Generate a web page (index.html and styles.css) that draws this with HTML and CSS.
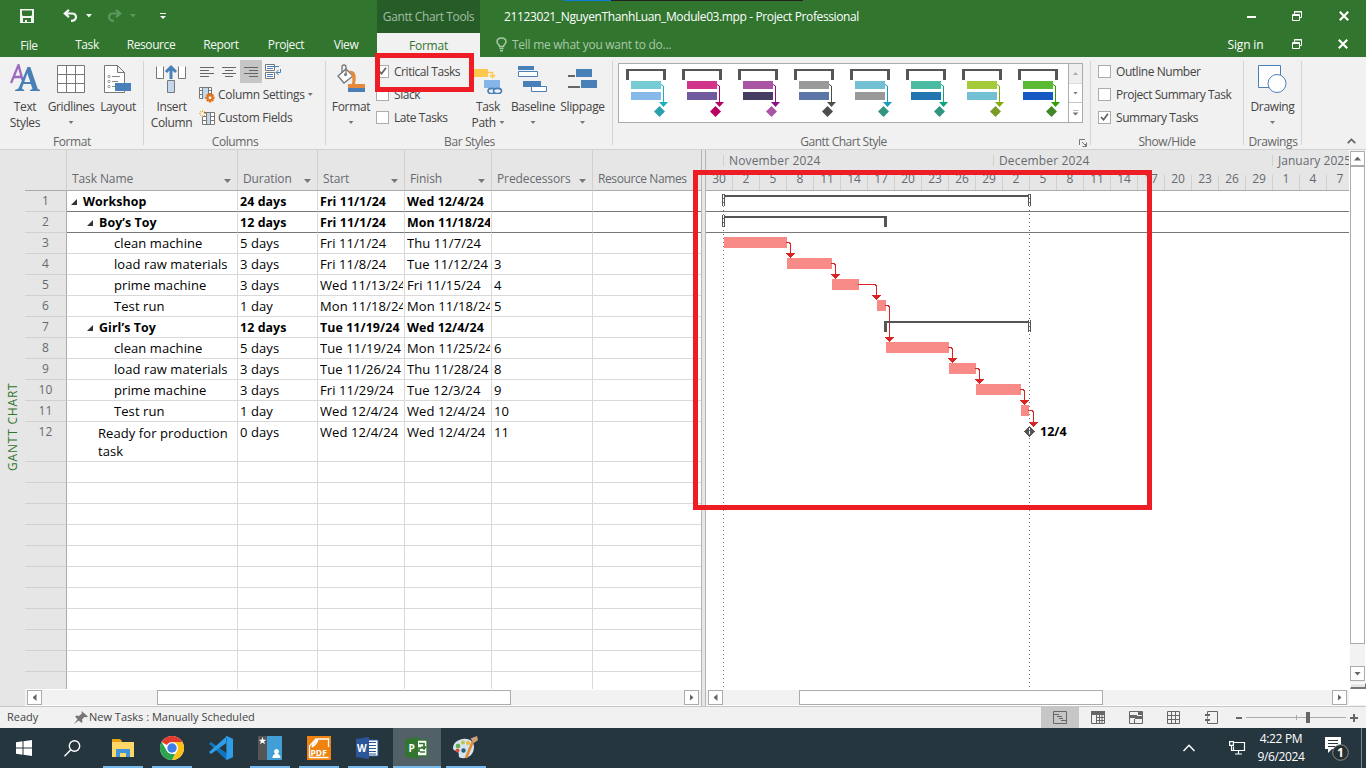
FILE: index.html
```html
<!DOCTYPE html>
<html lang="en">
<head>
<meta charset="utf-8">
<title>21123021_NguyenThanhLuan_Module03.mpp - Project Professional</title>
<link rel="stylesheet" href="styles.css">
</head>
<body>
<div class="app">
  <header class="top">
    <div class="top-left">
      <div class="quick">
        <svg class="q-save" width="14" height="14" viewBox="0 0 14 14"><path fill="#f4f4f4" fill-rule="evenodd" d="M0 0h14v14H0zM2 1.500v4.500l1 1h8l1-1V1.500zM3 9v4h2v-2h2v2h4V9z"/></svg>
        <svg class="q-undo" width="15" height="13" viewBox="0 0 15 13"><path fill="none" stroke="#f4f4f4" stroke-width="2.200" d="M6 .8 1.800 4.500 6 8.200M2 4.500h7c5.500 0 5.500 7.300-1 7.300"/></svg>
        <svg class="q-caret" width="6" height="4" viewBox="0 0 6 4"><path fill="#f4f4f4" d="M0 0h6L3 3.500z"/></svg>
        <svg class="q-redo" width="15" height="13" viewBox="0 0 15 13"><path fill="none" stroke="#5f9660" stroke-width="2.200" d="M9 .8l4.200 3.700L9 8.200M13 4.500H6c-5.500 0-5.500 7.300 1 7.300"/></svg>
        <svg class="q-caret" width="6" height="4" viewBox="0 0 6 4"><path fill="#5f9660" d="M0 0h6L3 3.500z"/></svg>
        <svg class="q-more" width="6" height="6" viewBox="0 0 6 6"><path fill="#f4f4f4" d="M0 0h6v1H0zM0 3h6L3 6z"/></svg>
      </div>
      <nav class="tabs">
        <span class="w58">File</span><span class="w58">Task</span><span class="w70">Resource</span><span class="w70">Report</span><span class="w60">Project</span><span class="w60">View</span>
      </nav>
    </div>
    <div class="context">
      <div class="context-name">Gantt Chart Tools</div>
      <div class="context-tab">Format</div>
    </div>
    <div class="top-mid">
      <div class="title">21123021_NguyenThanhLuan_Module03.mpp - Project Professional</div>
      <div class="tell">
        <svg width="11" height="15" viewBox="0 0 11 15"><path fill="none" stroke="#a9c9a9" stroke-width="1.500" d="M3.500 9.500C3.500 8 1 7 1 4.800 1 2.500 3 1 5.500 1S10 2.500 10 4.800C10 7 7.500 8 7.500 9.500zM3.500 11.500h4M4 13.700h3"/></svg>
        <span>Tell me what you want to do...</span>
      </div>
    </div>
    <div class="window">
      <div class="win-row">
        <span></span>
        <svg width="9" height="11" viewBox="0 0 9 11"><path fill="#fff" d="M0 6h9v2H0z"/></svg>
        <svg width="10" height="10" viewBox="0 0 10 10"><path fill="none" stroke="#fff" d="M2.500 3V.5h7v6H8M.5 3.500h7v6h-7zM2 1h8M0 4.500h8"/></svg>
        <svg width="10" height="10" viewBox="0 0 10 10"><path stroke="#fff" stroke-width="2.200" d="M.8.8l8.400 8.400M9.200.8.8 9.200"/></svg>
      </div>
      <div class="win-row second">
        <span class="signin">Sign in</span>
        <svg width="10" height="10" viewBox="0 0 10 10"><path fill="none" stroke="#fff" d="M2.500 3V.5h7v6H8M.5 3.500h7v6h-7zM2 1h8M0 4.500h8"/></svg>
        <svg width="10" height="10" viewBox="0 0 10 10"><path stroke="#fff" stroke-width="2.200" d="M.8.8l8.400 8.400M9.200.8.8 9.200"/></svg>
      </div>
    </div>
    <div class="share-strip"></div>
  </header>

  <section class="ribbon">
    <div class="group g-format">
      <div class="controls">
        <div class="big w50"><svg width="31" height="30" viewBox="0 0 31 30"><path fill="none" stroke="#9d6abf" stroke-width="2.300" d="M1 19 8.500 1l4 15M4 13h8"/><path fill="#4a80b8" fill-rule="evenodd" d="M17.500 3h2.800l7.500 22 2.200 1v1H20v-1l2.500-1-1.700-5h-7.300l-1.600 4.600 2.300 1.400v1H5v-1l3.500-1.500zM14.300 18h6l-3-8.800z"/></svg><span>Text</span><span>Styles</span></div>
        <div class="big w42"><svg width="28" height="30" viewBox="0 0 28 30"><path fill="#fff" stroke="#777" d="M.5 1.500h27v27H.5z"/><path fill="none" stroke="#777" d="M9.500 1v27M18.500 1v27M0 10.500h28M0 19.500h28"/></svg><span>Gridlines</span><i class="caret"></i></div>
        <div class="big w52"><svg width="28" height="30" viewBox="0 0 28 30"><path fill="#fff" stroke="#777" d="M.5 1.500h13l7 7v20H.5zM13.500 1.500v7h7"/><path stroke="#888" d="M8 12.500h8M8 17.500h6M8 22.500h3"/><g fill="#fff" stroke="#999"><circle cx="5" cy="12.500" r="1.200"/><circle cx="5" cy="17.500" r="1.200"/><circle cx="5" cy="22.500" r="1.200"/></g><path fill="#4a80b8" d="M11 19h16v8H11z"/></svg><span>Layout</span></div>
      </div>
      <div class="caption">Format</div>
    </div>
    <div class="group g-columns">
      <div class="controls">
        <div class="big w55"><svg width="31" height="30" viewBox="0 0 31 30"><path fill="#fff" stroke="#777" d="M.5 2.500v12h7v-12M22.500 2.500v12h7v-12"/><path fill="#c3d7ee" stroke="#777" d="M11.500 16.500h7v12h-7z"/><path fill="none" stroke="#4a80b8" stroke-width="3" d="M15 15V3M10 8l5-5 5 5"/></svg><span>Insert</span><span>Column</span></div>
        <div class="stack">
          <div class="aligns">
            <b><svg width="14" height="12" viewBox="0 0 14 12"><path stroke="#666" d="M0 1.500h14M0 4.500h9M0 7.500h14M0 10.500h9"/></svg></b>
            <b><svg width="14" height="12" viewBox="0 0 14 12"><path stroke="#666" d="M0 1.500h14M3 4.500h8M0 7.500h14M3 10.500h8"/></svg></b>
            <b class="on"><svg width="14" height="12" viewBox="0 0 14 12"><path stroke="#666" d="M0 1.500h14M5 4.500h9M0 7.500h14M5 10.500h9"/></svg></b>
            <b><svg width="16" height="16" viewBox="0 0 16 16"><path fill="#fff" stroke="#777" d="M.5.500h9v6h-9zM.5 8.500h9v6h-9z"/><path fill="none" stroke="#4a80b8" d="M2 2.500h12M2 4.500h6M2 10.500h6M2 12.500h6M15.500 5v3.500H11M13.500 6l-2.500 2.500 2.500 2.500"/></svg></b>
          </div>
          <div class="small"><svg width="16" height="16" viewBox="0 0 16 16"><path fill="#fff" stroke="#777" d="M.5.500h12v11H.5zM3.500.500v11M9.500.500v11M.5 3.500h12M.5 7.500h12"/><path fill="#c3d7ee" d="M4 1h5v11H4z"/><path stroke="#e2731d" stroke-width="2.400" d="M11 6v9.500M6.500 10.800h9M7.800 7.500l6.500 6.500M14.300 7.500 7.800 14"/><circle cx="11" cy="10.800" r="1.400" fill="#fff"/></svg><span>Column Settings</span><i class="caret"></i></div>
          <div class="small"><svg width="16" height="16" viewBox="0 0 16 16"><path fill="#fff" stroke="#777" d="M3.500 2.500h12v12h-12zM7.500 2v12M11.500 2v12M3 6.500h12M3 10.500h12"/><path fill="#c3d7ee" d="M8 3h3v11H8z"/><path stroke="#e8b04a" d="M3.500 0v7M0 3.500h7M1 1l5 5M6 1 1 6"/><circle cx="3.500" cy="3.500" r="1.500" fill="#fff"/></svg><span>Custom Fields</span></div>
        </div>
      </div>
      <div class="caption">Columns</div>
    </div>
    <div class="group g-bars">
      <div class="controls">
        <div class="big w50"><svg width="30" height="30" viewBox="0 0 30 30"><path fill="#fff" stroke="#777" stroke-width="1.300" d="M2 12 10 5l7 7-9 7z"/><path fill="none" stroke="#777" stroke-width="1.300" d="M6 9V3q0-2 2-2t2 2v7"/><circle cx="9.500" cy="10.500" r="1.500" fill="#777"/><path fill="#e58a3c" d="M13 7c6-1 8 4 6 13h-3c1-6 0-10-3-13zM12 20h17v4H12z"/><path fill="#4a80b8" d="M12 24h17v4H12z"/></svg><span>Format</span><i class="caret"></i></div>
        <div class="checks bar-checks">
          <label><i class="box"><svg width="9" height="8" viewBox="0 0 9 8"><path fill="none" stroke="#666" stroke-width="1.800" d="M1 4l2.500 2.700L8 .7"/></svg></i>Critical Tasks</label>
          <label><i class="box"></i>Slack</label>
          <label><i class="box"></i>Late Tasks</label>
        </div>
        <div class="big w40"><svg width="32" height="30" viewBox="0 0 32 30"><path fill="#fdc84b" d="M0 5h16v8H0z"/><path fill="none" stroke="#fdc84b" stroke-width="1.500" d="M16 8.500h4.500V13M18 11l2.500 2.500L23 11"/><path fill="#84b5e8" d="M12 16h16v8H12z"/><g fill="#f1f1f1" stroke="#4a80b8" stroke-width="1.700"><ellipse cx="20" cy="27" rx="4" ry="2.600"/><ellipse cx="25.500" cy="27" rx="4" ry="2.600"/></g></svg><span>Task</span><span>Path <i class="caret inline"></i></span></div>
        <div class="big w50"><svg width="30" height="30" viewBox="0 0 30 30"><path fill="#4a80b8" d="M0 2h16v4H0zM5 17h18v6H5z"/><path fill="#fff" stroke="#4a80b8" d="M.5 7.500h19v5H.5zM13.500 22.500h15v5h-15z"/></svg><span>Baseline</span><i class="caret"></i></div>
        <div class="big w49"><svg width="29" height="30" viewBox="0 0 29 30"><path fill="#4a80b8" d="M8 5h16v8H8zM13 16h16v8H13z"/><path fill="#666" d="M0 11h7v2H0zM0 22h12v2H0z"/></svg><span>Slippage</span><i class="caret"></i></div>
      </div>
      <div class="caption">Bar Styles</div>
    </div>
    <div class="group g-style">
      <div class="controls">
        <div class="gallery">
          <div class="styles" id="styles"></div>
          <div class="spin"><b class="dim"><i class="up"></i></b><b><i class="caret"></i></b><b><i class="caret topped"></i></b></div>
        </div>
      </div>
      <div class="caption">Gantt Chart Style</div>
      <svg class="launcher" width="8" height="8" viewBox="0 0 8 8"><path fill="none" stroke="#777" d="M.5 6V.5H6M3 3l4 4M7.500 3.500v4h-4M5 5.500h2"/></svg>
    </div>
    <div class="group g-show">
      <div class="controls">
        <div class="checks">
          <label><i class="box"></i>Outline Number</label>
          <label><i class="box"></i>Project Summary Task</label>
          <label><i class="box"><svg width="9" height="8" viewBox="0 0 9 8"><path fill="none" stroke="#666" stroke-width="1.800" d="M1 4l2.500 2.700L8 .7"/></svg></i>Summary Tasks</label>
        </div>
      </div>
      <div class="caption">Show/Hide</div>
    </div>
    <div class="group g-draw">
      <div class="controls">
        <div class="big w57"><svg width="29" height="30" viewBox="0 0 29 30"><path fill="#fff" stroke="#4a80b8" d="M.5 1.500h22v22H.5z"/><circle cx="19" cy="19.500" r="9" fill="#fff" stroke="#4a80b8"/></svg><span>Drawing</span><i class="caret"></i></div>
      </div>
      <div class="caption">Drawings</div>
    </div>
    <div class="collapse"><svg width="9" height="6" viewBox="0 0 9 6"><path fill="none" stroke="#666" stroke-width="1.800" d="M.7 5.200 4.500 1.400l3.800 3.800"/></svg></div>
  </section>

  <main class="work">
    <div class="view-name"><span>GANTT CHART</span></div>
    <div class="table-pane">
      <div class="grid" id="grid">
        <div class="row head"><div class="num"></div><div>Task Name<i class="caret"></i></div><div>Duration<i class="caret"></i></div><div>Start<i class="caret"></i></div><div>Finish<i class="caret"></i></div><div>Predecessors<i class="caret"></i></div><div class="tight">Resource Names</div></div>
      </div>
      <div class="hscroll"><b><i class="left"></i></b><div class="thumb t1"></div><b><i class="right"></i></b></div>
    </div>
    <div class="splitter"></div>
    <div class="chart-pane">
      <div class="months"><span class="m0"></span><span class="m1">November 2024</span><span class="m2">December 2024</span><span class="m3">January 2025</span></div>
      <div class="days" id="days"></div>
      <svg class="chart" width="643" height="498" viewBox="706 191 643 498" id="chart" shape-rendering="crispEdges"></svg>
      <div class="hscroll"><b><i class="left"></i></b><div class="thumb t2"></div><b><i class="right"></i></b></div>
    </div>
    <div class="vscroll"><b><i class="up"></i></b><div class="vthumb"></div><b><i class="caret"></i></b><div class="vsplit"></div></div>
    <div class="mark mark-chart"></div>
  </main>

  <div class="status">
    <span class="ready">Ready</span>
    <svg class="pin" width="14" height="13" viewBox="0 0 14 13"><path fill="#777" d="M7.500 0 14 5.500l-1.500.8-2-.3L8 8.500l.5 2L7.500 12 4.800 9.500 0 13l3.500-4.800L1 5.500 2.500 4.500l2.500.5L7.800 2.500z"/></svg>
    <span class="mode">New Tasks : Manually Scheduled</span>
    <div class="views">
      <b class="on"><svg width="14" height="13" viewBox="0 0 14 13"><path fill="none" stroke="#666" d="M.5.500h13v12H.5zM1 3.500h5M4 5.500h5M6 7.500h4M8 9.500h5"/></svg></b>
      <b><svg width="14" height="13" viewBox="0 0 14 13"><path fill="none" stroke="#666" d="M.5.500h13v12H.5zM5.500 3v9M8.500 3v9M11 3v9M5 6.500h9M5 9.500h9"/><path fill="#666" d="M0 0h14v4H0z"/></svg></b>
      <b><svg width="14" height="13" viewBox="0 0 14 13"><path fill="none" stroke="#666" d="M.5.500h13v12H.5zM5.500 8v4"/><path fill="#666" d="M9 1h4v3H9zM1 4h7v3H1zM6 5h8v3H6z"/></svg></b>
      <b><svg width="13" height="13" viewBox="0 0 13 13"><path fill="none" stroke="#666" d="M.5.500h12v12H.5zM4.500 0v13M8.500 0v13M0 4.500h13M0 8.500h13"/></svg></b>
      <b><svg width="13" height="13" viewBox="0 0 13 13"><path fill="none" stroke="#666" d="M2.500 3V.5h10v12h-10V10M2.500 5.500v2"/><path fill="#666" d="M0 3h5v2H0zM0 8h5v2H0z"/></svg></b>
    </div>
    <svg class="zoom" width="124" height="14" viewBox="0 0 124 14"><path fill="#666" d="M0 6h6v2H0zM114 6h8v2h-8zM117 3h2v8h-2zM70 1h4v11h-4z"/><path stroke="#aaa" d="M10 6.500h60M74 6.500h36M60.500 4v5"/></svg>
  </div>

  <footer class="taskbar">
    <b class="s48"><svg width="16" height="16" viewBox="0 0 16 16"><path fill="#fff" d="M0 2.200 6.500 1.300V7.500H0zM7.500 1.200 16 0v7.500H7.500zM0 8.500h6.500v6.200L0 13.800zM7.500 8.500H16V16l-8.500-1.200z"/></svg></b>
    <b class="s50"><svg width="17" height="17" viewBox="0 0 17 17"><circle cx="10.500" cy="6" r="5.200" fill="none" stroke="#fff" stroke-width="1.400"/><path stroke="#fff" stroke-width="1.400" d="M6.800 9.800.5 16.200"/></svg></b>
    <b class="run"><svg width="22" height="18" viewBox="0 0 22 18"><path fill="#e8a214" d="M0 0h8l2 2-1 2H0z"/><path fill="#ffd767" d="M0 3h22v15H0z"/><path fill="#3f94dc" d="M4 18v-8h14v8h-4v-4H8v4z"/></svg></b>
    <b class="run"><svg width="24" height="24" viewBox="0 0 24 24"><circle cx="12" cy="12" r="12" fill="#fff"/><path fill="#e33b2e" d="M12 12 1.600 6A12 12 0 0 1 22.400 6z"/><path fill="#fbc116" d="M12 6h10.400A12 12 0 0 1 12 24l5-9z"/><path fill="#2da44e" d="M1.600 6 7 15l5 3 3 0-3 6A12 12 0 0 1 1.600 6z"/><circle cx="12" cy="12" r="6" fill="#fff"/><circle cx="12" cy="12" r="4.700" fill="#3f7de8"/></svg></b>
    <b><svg width="24" height="24" viewBox="0 0 24 24"><path fill="#1176bf" d="M17.500 0 24 3v18l-6.500 3L2 9.500 0 8l2-2 16 11.500z"/><path fill="#2d9de8" d="M17.500 0 24 3v18l-6.500 3zM0 16l2 2L18 6.500V0z"/></svg></b>
    <b class="run"><svg width="24" height="24" viewBox="0 0 24 24"><path fill="#555" d="M0 0h9v24H0z"/><path fill="#419fd6" d="M9 0h15v24H9z"/><path fill="#fff" d="M4.500 1 5.500 3.700h2.900L6.100 5.400 7 8.200 4.500 6.500 2 8.200l.9-2.800L.6 3.700h2.900zM18.500 13a2.500 2.500 0 0 1 1.500 4.500c0 1 2.500 1 2.500 4.500h-8c0-3.500 2.500-3.500 2.500-4.500a2.500 2.500 0 0 1 1.500-4.500z"/></svg></b>
    <b class="run"><svg width="24" height="24" viewBox="0 0 24 24"><path fill="#f08310" d="M0 0h24v24H0z"/><path fill="none" stroke="#fff" stroke-width="1.300" d="M2.500 21.500V10L9 3h12.500v8M2.500 21.500h19M5 11c1-5 5-6 6-8-1 5-3 6-6 8"/><text x="3.500" y="20" class="pdf">PDF</text></svg></b>
    <b class="run"><svg width="24" height="22" viewBox="0 0 24 22"><path fill="#fff" stroke="#2b579a" d="M12 3h10v16H12z"/><path stroke="#2b579a" stroke-width="1.200" d="M13 5.500h7M13 8.500h7M13 11.500h7M13 14.500h7M13 17h7"/><path fill="#2b579a" d="M0 2 13 0v22L0 20z"/><text x="1" y="15" class="letter">W</text></svg></b>
    <b class="active"><svg width="24" height="22" viewBox="0 0 24 22"><path fill="#fff" stroke="#31752f" stroke-width="1.300" d="M12 3h10v16H12z"/><path fill="none" stroke="#31752f" stroke-width="1.700" d="M14 6.500h5v5M14 15v-4h3M16.500 9.500l2.500 2.500 2-2.500M15 15h5"/><path fill="#31752f" d="M0 2 13 0v22L0 20z"/><text x="3.500" y="15" class="letter">P</text></svg></b>
    <b class="run"><svg width="25" height="24" viewBox="0 0 25 24"><path fill="#d5e3ef" d="M10 3c7-1 11 3 11 8 0 7-5 12-13 11-4-1-1-4-3-6s-5-1-5-4c0-5 5-8.500 10-9z"/><circle cx="10" cy="6.500" r="2" fill="#b9c948"/><circle cx="5" cy="10" r="2.300" fill="#5fae47"/><circle cx="4.500" cy="14.500" r="2" fill="#e04c3c"/><circle cx="15" cy="7" r="2" fill="#e9b735"/><circle cx="10.500" cy="14.500" r="2.200" fill="#25607f"/><path stroke="#e18a35" stroke-width="2.600" d="M13 22 20 5"/><path fill="#cfa177" d="M17.500 2.500 24 0l1 4-4 3z"/></svg></b>
    <div class="tray">
      <svg class="up-arrow" width="12" height="8" viewBox="0 0 12 8"><path fill="none" stroke="#fff" stroke-width="1.400" d="M.5 7 6 1.200 11.500 7"/></svg>
      <svg class="net" width="17" height="14" viewBox="0 0 17 14"><path fill="none" stroke="#fff" stroke-width="1.200" d="M5 1.500h10.500v8H4.500v-4M6 13h7M9.500 10v3M.6.600h3.800v3.800H.6zM2.500 4.500v5h2"/></svg>
      <div class="clock"><span>4:22 PM</span><span>9/6/2024</span></div>
      <svg class="notes" width="26" height="26" viewBox="0 0 26 26"><path fill="#fff" d="M1 2h16v12H8l-4 4v-4H1z"/><path stroke="#26373f" stroke-width="1.200" d="M4 5.500h10M4 8.500h10M4 11.500h7"/><circle cx="16.500" cy="17.500" r="7.800" fill="#26302f" stroke="#8c8c8c"/><text x="13" y="22" class="badge">1</text></svg>
      <i class="peek"></i>
    </div>
  </footer>
  <div class="mark mark-check"></div>
</div>
<script src="script.js"></script>
</body>
</html>
```
FILE: styles.css
```css
* { box-sizing: border-box; }
body { margin: 0; font: 12px/16px "Open Sans", "Noto Sans", sans-serif; color: #444; overflow: hidden; }
b { font-weight: normal; }
svg { display: block; flex: none; }
.app { position: relative; width: 1366px; height: 768px; display: flex; flex-direction: column; background: #fff; white-space: nowrap; }

.top { position: relative; display: flex; height: 57px; background: #31752f; color: #fff; flex: none; }
.top-left { width: 377px; }
.quick { display: flex; align-items: center; height: 31px; padding-left: 20px; }
.q-undo { margin-left: 29px; }
.q-caret { margin-left: 8px; }
.q-redo { margin-left: 15px; }
.q-more { margin-left: 24px; }
.tabs { display: flex; height: 26px; line-height: 28px; color: #f3f8f3; letter-spacing: -.4px; }
.tabs span { text-align: center; }
.tabs span:first-child { padding-top: 1px; }
.w58 { width: 58px; } .w70 { width: 70px; } .w60 { width: 60px; }
.context { width: 103px; text-align: center; letter-spacing: -.4px; }
.context-name { height: 33px; line-height: 34px; background: #265c28; color: #a4bea5; }
.context-tab { height: 24px; line-height: 25px; background: #f1f1f1; color: #31752f; letter-spacing: -.2px; }
.top-mid { flex: 1; }
.title { padding-left: 24px; height: 31px; line-height: 34px; letter-spacing: -.38px; }
.tell { display: flex; align-items: center; height: 26px; padding-left: 16px; gap: 5px; color: #a9c9a9; letter-spacing: -.27px; }
.tell span { padding-top: 2px; }
.window { width: 150px; }
.win-row { display: grid; grid-template-columns: 24px 22px 70px 24px; align-items: center; justify-items: center; height: 31px; }
.win-row.second { grid-template-columns: 59px 43px 48px; height: 26px; }
.win-row.second svg { margin-left: 1px; }
.signin { padding-top: 2px; letter-spacing: -.15px; }
.share-strip { position: absolute; left: 563px; top: 0; width: 240px; height: 1px; background: linear-gradient(90deg, #0f7bd8 48px, #202020 48px); }

.ribbon { display: flex; height: 93px; background: #f1f1f1; border-bottom: 1px solid #d2d2d2; flex: none; letter-spacing: -.3px; }
.group { position: relative; height: 92px; }
.group::after { content: ""; position: absolute; right: 0; top: 4px; width: 1px; height: 84px; background: #d4d4d4; }
.controls { display: flex; height: 75px; }
.caption { height: 17px; line-height: 19px; text-align: center; color: #666; letter-spacing: -.4px; }
.g-format { width: 144px; } .g-columns { width: 182px; } .g-bars { width: 287px; }
.g-style { width: 478px; } .g-show { width: 153px; } .g-draw { width: 58px; }
.g-style .caption { padding-right: 17px; letter-spacing: -.5px; }
.g-show .caption { padding-right: 1px; }
.big { display: flex; flex-direction: column; align-items: center; padding-top: 7px; letter-spacing: -.35px; }
.big > svg { margin-bottom: 5px; }
.big > .caret { margin-top: 6px; }
.w50 { width: 50px; } .w42 { width: 42px; } .w52 { width: 52px; } .w55 { width: 55px; }
.w40 { width: 40px; } .w49 { width: 49px; } .w57 { width: 57px; }
.caret, .up { display: inline-block; width: 5px; height: 3px; background: #777; clip-path: polygon(0 0, 100% 0, 50% 100%); flex: none; }
.caret.inline { vertical-align: 3px; margin-left: 1px; }
.up { clip-path: polygon(50% 0, 100% 100%, 0 100%); }
.stack { padding-top: 3px; }
.aligns { display: flex; height: 23px; margin-left: -3px; }
.aligns b { width: 22px; height: 23px; display: flex; align-items: center; justify-content: center; }
.aligns .on { background: #c6c6c6; }
.small { display: flex; align-items: center; height: 23px; gap: 3px; }
.checks { padding-top: 3px; letter-spacing: -.45px; }
.checks label { display: flex; align-items: center; height: 23px; gap: 5px; }
.bar-checks { width: 92px; }
.g-show .checks { padding-left: 7px; }
.box { width: 13px; height: 13px; border: 1px solid #ababab; background: #fff; display: flex; align-items: center; justify-content: center; margin-top: -1px; }
.gallery { display: flex; width: 465px; height: 60px; margin: 6px 0 0 5px; border: 1px solid #ababab; background: #fff; }
.styles { display: flex; width: 449px; }
.spin { width: 14px; border-left: 1px solid #ababab; display: grid; grid-template-rows: 20px 19px 19px; }
.spin b { display: flex; align-items: center; justify-content: center; border-bottom: 1px solid #c6c6c6; }
.spin b:last-child { border: 0; }
.spin .dim { background: #e6e6e6; opacity: .6; }
.topped { height: 6px; width: 6px; clip-path: polygon(0 0, 100% 0, 100% 1px, 0 1px, 0 3px, 100% 3px, 50% 100%, 0 3px); }
.launcher { position: absolute; right: 4px; top: 82px; }
.collapse { flex: 1; display: flex; justify-content: flex-end; align-items: flex-end; padding: 0 10px 5px 0; }

.work { position: relative; display: flex; height: 556px; background: #fff; flex: none; }
.view-name { width: 25px; background: #e6e6e6; display: flex; justify-content: center; }
.view-name span { writing-mode: vertical-rl; transform: rotate(180deg); height: 90px; margin-top: 231px; color: #31752f; letter-spacing: .8px; width: 18px; line-height: 18px; }
.table-pane { width: 676px; }
.grid { height: 539px; overflow: hidden; }
.row { display: grid; grid-template-columns: 42px 171px 80px 87px 87px 101px 109px; height: 21px; color: #000; line-height: 19px; font-size: 13px; }
.row > div { border-right: 1px solid #d9d9d9; border-bottom: 1px solid #d9d9d9; padding: 1px 1px 0 2px; overflow: clip; overflow-clip-margin: content-box; letter-spacing: .08px; }
.row > div:last-child { border-right: 0; }
.row .num { background: #e6e6e6; border-right-color: #ababab; border-bottom-color: #d0d0d0; text-align: center; padding: 0; color: #666a70; line-height: 19px; font-size: 12px; }
.row.head { height: 41px; background: #e6e6e6; color: #666a70; font-size: 12px; }
.row.head > div { border-color: #d0d0d0 #d0d0d0 #ababab; padding: 19px 0 0 5px; display: flex; justify-content: space-between; letter-spacing: -.1px; }
.row.head .tight { letter-spacing: -.4px; }
.row.head .caret { width: 7px; height: 4px; margin: 10px 6px 0 0; }
.row.sum { font-weight: bold; font-size: 12.4px; }
.row.sum .num { font-weight: normal; }
.row.rule > div:not(.num) { border-bottom-color: #777; }
.row.tall { height: 40px; }
.row.tall > div:nth-child(2) { line-height: 18px; padding-top: 2px; }
.row .l1 { padding-left: 4px; } .row .l2 { padding-left: 20px; } .row .l3 { padding-left: 47px; } .row .l4 { padding-left: 31px; }
.fold { display: inline-block; width: 6px; height: 6px; background: #333; clip-path: polygon(100% 0, 100% 100%, 0 100%); margin-right: 6px; vertical-align: 1px; }
.hscroll { display: flex; justify-content: space-between; height: 17px; padding: 1px 2px; background: linear-gradient(#fff 1px, #f2f2f2 1px 16px, #fff 16px); }
.hscroll b, .vscroll b { width: 15px; height: 15px; border: 1px solid #ababab; background: #fff; display: flex; align-items: center; justify-content: center; }
.left, .right { width: 4px; height: 7px; background: #666; clip-path: polygon(100% 0, 100% 100%, 0 50%); }
.right { clip-path: polygon(0 0, 100% 50%, 0 100%); }
.thumb { border: 1px solid #ababab; background: #fff; height: 15px; }
.t1 { width: 354px; margin-right: 58px; }
.splitter { width: 5px; background: #e6e6e6; border: 1px solid #b5b5b5; border-width: 0 1px; }
.chart-pane { width: 643px; overflow: hidden; }
.months { height: 20px; padding-top: 5px; display: flex; background: #e6e6e6; color: #666a70; line-height: 11px; }
.months span { height: 11px; padding-left: 5px; border-left: 1px solid #d0d0d0; letter-spacing: .03px; }
.months .m0 { width: 17px; border: 0; padding: 0; flex: none; }
.months .m1, .months .m2 { letter-spacing: .15px; }
.m1 { width: 270px; flex: none; } .m2 { width: 279px; flex: none; }
.days { display: flex; height: 21px; background: #e6e6e6; border-bottom: 1px solid #ababab; color: #666a70; padding-top: 5px; }
.days span { width: 27px; flex: none; border-right: 1px solid #d0d0d0; text-align: center; line-height: 8px; height: 15px; }
.t2 { width: 304px; margin-right: 153px; }
.chart { display: block; }
.bar { fill: #f88a88; } .link { fill: none; stroke: #dc2323; } .tip { fill: #dc2323; } .sumbar { fill: #555; }
.due { font-weight: bold; font-size: 12.500px; fill: #000; }
.vscroll { width: 17px; padding: 1px 1px; display: flex; flex-direction: column; background: linear-gradient(90deg, #fff 1px, #f2f2f2 1px 16px, #fff 16px); }
.vscroll .up, .vscroll .caret { width: 7px; height: 4px; background: #666; }
.vthumb { width: 15px; height: 478px; background: #fff; border: 1px solid #ababab; margin-bottom: 22px; }
.vsplit { width: 16px; height: 6px; margin-top: 2px; background: #e6e6e6; border: 1px solid #fff; border-right: 1px solid #777; border-bottom: 2px solid #777; }
.vscroll::after { content: ""; flex: 1; background: #fff; width: 16px; }
.mark { position: absolute; border: 5px solid #ee1c25; }
.mark-chart { left: 693px; top: 20px; width: 459px; height: 340px; }
.mark-check { left: 375px; top: 53px; width: 99px; height: 39px; }

.status { display: flex; align-items: center; height: 22px; background: #f1f1f1; border-top: 1px solid #c6c6c6; font-size: 11px; padding-left: 7px; flex: none; }
.status > span { padding-bottom: 2px; }
.ready { width: 67px; }
.pin { margin-right: 1px; }
.views { display: flex; margin-left: auto; }
.views b { width: 37.8px; height: 21px; display: flex; align-items: center; justify-content: center; }
.views .on { background: #c6c6c6; }
.zoom { margin: 0 6px 0 6px; }

.taskbar { display: flex; height: 40px; background: #25363f; color: #fff; flex: none; }
.taskbar > b { width: 49px; display: flex; align-items: center; justify-content: center; border-bottom: 2px solid transparent; padding-top: 2px; }
.taskbar > .s48 { width: 48px; } .taskbar > .s50 { width: 50px; padding-right: 2px; }
.taskbar > .run { background: linear-gradient(#76b9ed, #76b9ed) center 38px / 40px 2px no-repeat border-box; }
.taskbar > .active { background: #526168; border-color: #76b9ed; width: 48px; margin-left: 1px; }
.letter { font: bold 10px "Open Sans", sans-serif; fill: #fff; }
.pdf { font: bold 8.500px "Open Sans", sans-serif; fill: #fff; }
.tray { margin-left: auto; display: flex; align-items: center; }
.net { margin-left: 34px; }
.clock { display: flex; flex-direction: column; align-items: center; line-height: 18px; width: 60px; margin-left: 5px; letter-spacing: -.35px; }
.notes { margin-left: 13px; }
.badge { font: bold 12px "Open Sans", sans-serif; fill: #fff; }
.peek { width: 1px; height: 40px; background: #7d878c; margin: 0 4px 0 11px; }
```
FILE: script.js
```js
const tasks = [
  [1, 'Workshop', '24 days', 'Fri 11/1/24', 'Wed 12/4/24', ''],
  [2, 'Boy’s Toy', '12 days', 'Fri 11/1/24', 'Mon 11/18/24', ''],
  [3, 'clean machine', '5 days', 'Fri 11/1/24', 'Thu 11/7/24', ''],
  [3, 'load raw materials', '3 days', 'Fri 11/8/24', 'Tue 11/12/24', '3'],
  [3, 'prime machine', '3 days', 'Wed 11/13/24', 'Fri 11/15/24', '4'],
  [3, 'Test run', '1 day', 'Mon 11/18/24', 'Mon 11/18/24', '5'],
  [2, 'Girl’s Toy', '12 days', 'Tue 11/19/24', 'Wed 12/4/24', ''],
  [3, 'clean machine', '5 days', 'Tue 11/19/24', 'Mon 11/25/24', '6'],
  [3, 'load raw materials', '3 days', 'Tue 11/26/24', 'Thu 11/28/24', '8'],
  [3, 'prime machine', '3 days', 'Fri 11/29/24', 'Tue 12/3/24', '9'],
  [3, 'Test run', '1 day', 'Wed 12/4/24', 'Wed 12/4/24', '10'],
  [4, 'Ready for production<br>task', '0 days', 'Wed 12/4/24', 'Wed 12/4/24', '11']
];
let rows = tasks.map((t, i) => {
  const sum = t[0] < 3;
  const cls = 'row' + (sum ? ' sum' : '') + (i < 2 ? ' rule' : '') + (i === 11 ? ' tall' : '');
  const name = `<div class="l${t[0]}">${sum ? '<i class="fold"></i>' : ''}${t[1]}</div>`;
  return `<div class="${cls}"><div class="num">${i + 1}</div>${name}${t.slice(2).map(c => `<div>${c}</div>`).join('')}<div></div></div>`;
}).join('');
for (let i = 0; i < 11; i++) rows += '<div class="row"><div class="num"></div>' + '<div></div>'.repeat(6) + '</div>';
document.getElementById('grid').insertAdjacentHTML('beforeend', rows);

const days = [30, 2, 5, 8, 11, 14, 17, 20, 23, 26, 29, 2, 5, 8, 11, 14, 17, 20, 23, 26, 29, 1, 4, 7];
document.getElementById('days').innerHTML = days.map(d => `<span>${d}</span>`).join('');

const looks = [
  ['#75cdd3', '#87b9eb', '#1bb0b9', '#2aa0aa'],
  ['#d0358b', '#7159a0', '#b80064', '#b80064'],
  ['#a855a3', '#463d63', '#8b1282', '#a855a3'],
  ['#999', '#5b76a7', '#4d4d4d', '#4d4d4d'],
  ['#73bfd3', '#999', '#1b9cba', '#33957f'],
  ['#4bbca2', '#2175b0', '#0aa57d', '#33957f'],
  ['#a4c93b', '#73bfd3', '#7fae00', '#7b9a2a'],
  ['#5cb934', '#1659c3', '#2f9e00', '#42862a']
];
document.getElementById('styles').innerHTML = looks.map(c => `<svg width="56" height="58" viewBox="619 64 56 58">
<path fill="#555" d="M626 69h40v11h-3v-9h-34v9h-3z"/><path fill="${c[0]}" d="M631 81h30v8h-30z"/><path fill="${c[1]}" d="M631 92h30v8h-30z"/>
<path fill="none" stroke="${c[2]}" d="M661 84.500l2.500 1.500v17"/><path fill="${c[2]}" d="M659 102h9l-4.500 5z"/><path fill="${c[3]}" d="M659.500 106l5.500 5.500-5.500 5.500-5.500-5.500z"/></svg>`).join('');

const bars = [[724, 787, 237, 790.5], [787, 832, 258, 835.5], [832, 859, 279, 876.5], [877, 886, 300, 889.5, 337],
  [886, 949, 342, 952.5], [949, 976, 363, 979.5], [976, 1021, 384, 1024.5], [1021, 1029, 405, 1033.5, 422]];
let art = '<path stroke="#777" d="M706 211.5h643M706 232.5h643"/>';
bars.forEach(([a, b, y, x, end = y + 16]) => {
  art += `<path class="bar" d="M${a} ${y}H${b}v11H${a}z"/><path class="link" d="M${b - 1} ${y + 5.5}H${x - 1.5}l1.500 1.500V${end}"/><path class="tip" d="M${x - 4.5} ${end}h9l-4.500 5z"/>`;
});
const legs = (x, y) => `<path fill="#555" d="M${x - 1} ${y - 1}h3v12h-3z"/><path fill="#fff" d="M${x} ${y - 1}h1v12h-1z"/>`;
art += '<path class="sumbar" d="M724 195h305v2H724zM724 216h163v11h-3v-9H724zM884 321h145v2H887v9h-3z"/>';
art += legs(723, 195) + legs(723, 216) + legs(1029, 195) + legs(1029, 321);
art += '<path class="sumbar" d="M1029.500 426l5.500 5.500-5.500 5.500-5.500-5.500z"/><path fill="#fff" d="M1029 428h1v7h-1z"/>';
art += '<path stroke="#777" stroke-dasharray="1 3" d="M723.5 194V688M1029.5 194V688"/>';
art += '<text class="due" x="1040" y="436">12/4</text>';
document.getElementById('chart').innerHTML = art;
```
